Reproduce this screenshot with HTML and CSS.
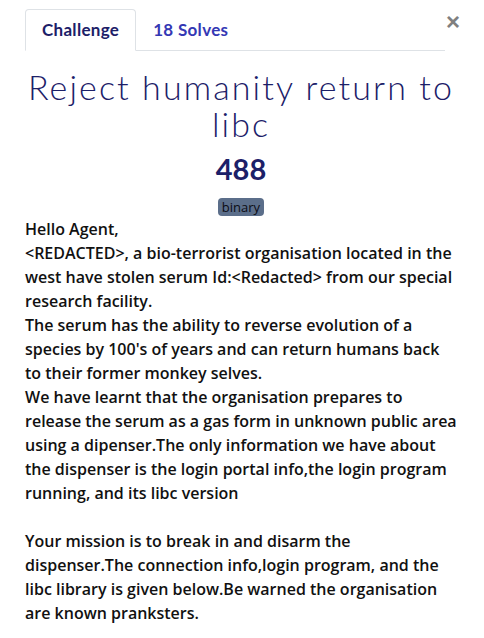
FILE: index.html
```html
<!DOCTYPE html>
<html>
<head>
<meta charset="utf-8">
<link rel="stylesheet" href="styles.css">
</head>
<body>
<div class="modal">
  <button class="close" aria-label="Close">&times;</button>
  <ul class="tabs">
    <li class="tab active">Challenge</li>
    <li class="tab">18 Solves</li>
  </ul>
  <div class="content">
    <h2 class="title">Reject humanity return to libc</h2>
    <h3 class="value">488</h3>
    <div class="tags"><span class="badge">binary</span></div>
    <div class="desc">
      <p>Hello Agent,<br>
      &lt;REDACTED&gt;, a bio-terrorist organisation located in the west have stolen serum Id:&lt;Redacted&gt; from our special research facility.<br>
      The serum has the ability to reverse evolution of a species by 100's of years and can return humans back to their former monkey selves.<br>
      We have learnt that the organisation prepares to release the serum as a gas form in unknown public area using a dipenser.The only information we have about the dispenser is the login portal info,the login program running, and its libc version</p>
      <p>Your mission is to break in and disarm the dispenser.The connection info,login program, and the libc library is given below.Be warned the organisation are known pranksters.</p>
    </div>
  </div>
</div>
</body>
</html>
```
FILE: styles.css
```css
html, body {
  margin: 0;
  padding: 0;
  background: #fff;
}
.modal {
  position: relative;
  padding: 9px 27px 0 25px;
  font-family: "Open Sans", sans-serif;
  color: #212529;
}
.close {
  position: absolute;
  top: 10px;
  right: 24px;
  border: 0;
  background: none;
  padding: 0;
  font-family: "Liberation Sans", sans-serif;
  font-size: 24px;
  font-weight: 700;
  line-height: 24px;
  color: #808080;
}
.tabs {
  display: flex;
  list-style: none;
  margin: 0 12px 0 0;
  padding: 0;
  border-bottom: 1px solid #dee2e6;
}
.tab {
  font-family: "Lato", sans-serif;
  font-weight: 700;
  font-size: 17px;
  letter-spacing: 0.3px;
  line-height: 24px;
  padding: 8px 16px;
  margin-bottom: -1px;
  border: 1px solid transparent;
  border-radius: 4px 4px 0 0;
  color: #3438b4;
}
.tab.active {
  color: #1c2068;
  border-color: #dee2e6 #dee2e6 #fff;
  background: #fff;
}
.content {
  padding-top: 17px;
}
.title {
  margin: 0;
  text-align: center;
  font-family: "Lato", sans-serif;
  font-weight: 300;
  font-size: 34px;
  letter-spacing: 2.1px;
  line-height: 37px;
  color: #1c2068;
}
.value {
  margin: 10px 0 0;
  text-align: center;
  font-family: "Lato", sans-serif;
  font-weight: 700;
  font-size: 29px;
  line-height: 34px;
  color: #1c2068;
}
.tags {
  display: flex;
  justify-content: center;
  margin-top: 12px;
}
.badge {
  display: block;
  background: #5b6e8a;
  color: #0c0c14;
  font-size: 13px;
  font-weight: 400;
  line-height: 18px;
  padding: 0 4px;
  border-radius: 4px;
}
.desc {
  margin-top: 1px;
  font-size: 16px;
  font-weight: 600;
  line-height: 24px;
  color: #111;
}
.desc p {
  margin: 0 0 24px;
}
```
